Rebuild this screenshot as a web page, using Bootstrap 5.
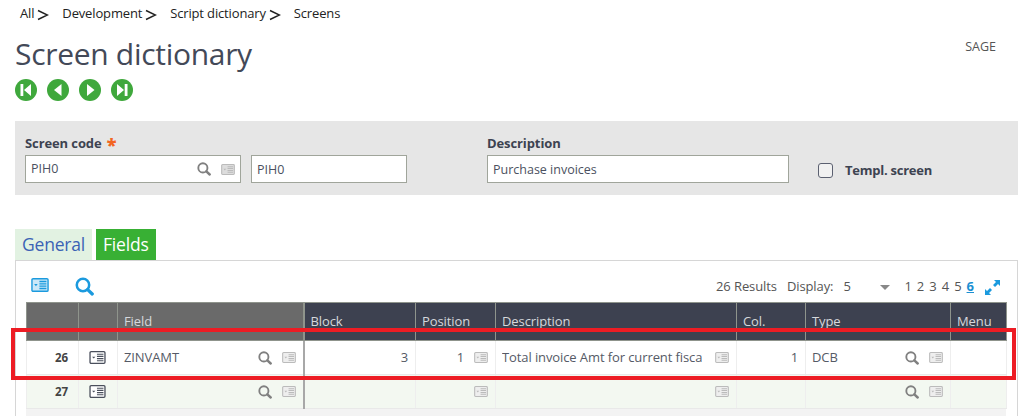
<!DOCTYPE html>
<html lang="en">
<head>
<meta charset="utf-8">
<title>Screen dictionary</title>
<link rel="stylesheet" href="https://cdn.jsdelivr.net/npm/bootstrap@5.3.0/dist/css/bootstrap.min.css">
<style>
html,body{height:416px;overflow:hidden}
body{position:relative;font-family:"Open Sans","Noto Sans",sans-serif;font-size:13px;color:#3d4351;background:#fff;width:1024px}
.crumbs{padding:4px 0 0 20px;height:32px;font-size:13px;color:#222;gap:13px;letter-spacing:-.15px}
.crumbs svg{margin:5px 0 0 3px}
.head-row{padding:0 28px 0 15px;height:44px}
.page-title{font-size:30px;font-weight:400;line-height:44px;margin:0;letter-spacing:-.3px;color:#434958}
.owner{font-size:12.5px;color:#555;margin-top:6px}
.rec-nav{padding-left:15px;gap:10px;height:45px;padding-top:3px}
.search-panel{margin:0 6px 0 15px;background:#e6e6e6;height:74px;padding:14px 10px 0}
.lab{font-weight:700;font-size:13px;line-height:16px;margin-bottom:4px;height:16px;letter-spacing:-.1px}
.lab b{color:#f26522;font-size:18px;line-height:12px;vertical-align:-3px;margin-left:2px}
.inp{height:28px;background:#fff;border:1px solid #a0a59b;padding:0 5px;line-height:28px;color:#4b5160;font-size:12.5px;gap:10px}
.w-code{width:216px}.w-sec{width:156px;margin-left:10px}.w-desc{width:302px;margin-left:80px}
.tmpl{margin:23px 0 0 29px;gap:12px;font-weight:700;line-height:16px;height:24px;letter-spacing:-.25px}
.tick{width:15px;height:15px;border:1.5px solid #5b6070;border-radius:3px;background:#f1f1f1}
.tab-row{margin:34px 0 0 15px;height:31px;gap:4px}
.tab-g,.tab-f{font-size:17.5px;line-height:31px;padding:0 7px;letter-spacing:-.2px}
.tab-g{background:#e2f2e2;color:#3b62b5}
.tab-f{background:#38b034;color:#fff}
.grid-card{margin:0 6px 0 15px;border:1px solid #d6d6d6;border-bottom:0;height:156px;padding:0 11px 0 10px;overflow:hidden}
.bar{height:41px;padding:0 5px 0 5px}
.bar .tools{gap:26px;padding-top:7px}
.bar .tools .find{margin-top:3px}
.meta{font-size:13px;color:#555;gap:10px;padding-top:11px;letter-spacing:-.1px}
.pager{gap:5px;letter-spacing:0;margin-left:4px}
.pager a{color:#1b8fd2;font-weight:700;text-decoration:underline}
.dd{width:47px;display:flex;justify-content:space-between;align-items:center}
.caret-t{width:0;height:0;border:5px solid transparent;border-top:5px solid #888;border-bottom:0}
table.fgrid{table-layout:fixed;width:980px;border-collapse:collapse;margin:0;font-size:13px}
.fgrid th{background:#3d4150;color:#d6d8dc;font-weight:400;height:38px;vertical-align:middle;padding:0 6px 2px;border:1px solid #8f948c;line-height:16px;letter-spacing:-.1px}
.fgrid th.frz{background:#6a6a6a}
.fgrid th.frz-end{border-right:2px solid #8f948c}
.fgrid td{height:34px;padding:0 7px 0 6px;border-left:1px solid #eee;border-right:1px solid #eee;border-bottom:1px solid #e9e9e9;color:#555a66;white-space:nowrap;overflow:hidden;letter-spacing:-.1px}
.fgrid td.frz-end{border-right:2px solid #a8a8a8}
.fgrid tr.alt td{background:#f3f8f1;height:34px}
.fgrid td.num{font-weight:700;text-align:right;padding-right:10px;font-size:11.5px;color:#444}
.cell{display:flex;align-items:center;justify-content:space-between;gap:6px}
.cell .ic{display:flex;gap:10px;margin-left:auto;align-items:center}
.r-val{margin-left:auto}
.mag-ic{color:#808080}
.bottom-band{height:8px;background:#f3f3f3;width:980px}
.red-mark{position:absolute;left:11px;top:328px;width:1005px;height:52px;border:4px solid #ed1c24;pointer-events:none}
svg{display:block;flex:none}
</style>
</head>
<body>
<svg width="0" height="0" class="position-absolute">
  <symbol id="mag" viewBox="0 0 15 15"><circle cx="6.3" cy="6.3" r="4.9" fill="none" stroke="currentColor" stroke-width="2"/><path d="M10 10l3.6 3.4" stroke="currentColor" stroke-width="2.6" stroke-linecap="round"/></symbol>
  <symbol id="card" viewBox="0 0 15 12"><rect x=".6" y=".6" width="13.8" height="10.8" rx="1" fill="var(--f,#fff)" stroke="currentColor" stroke-width="1.2"/><path d="M2.5 5.2h3L4 7z" fill="currentColor"/><path d="M7 3h6M7 5h6M7 7h6M7 9h6" stroke="currentColor" stroke-width="1.1"/></symbol>
  <symbol id="sep" viewBox="0 0 12 12"><path d="M1 1.500l9.500 4.500L1 10.500" fill="none" stroke="#222" stroke-width="1.5"/></symbol>
</svg>

<nav class="crumbs d-flex" aria-label="breadcrumb">
  <span class="d-flex">All<svg width="12" height="12"><use href="#sep"/></svg></span>
  <span class="d-flex">Development<svg width="12" height="12"><use href="#sep"/></svg></span>
  <span class="d-flex">Script dictionary<svg width="12" height="12"><use href="#sep"/></svg></span>
  <span>Screens</span>
</nav>

<div class="head-row d-flex justify-content-between">
  <h1 class="page-title">Screen dictionary</h1>
  <span class="owner">SAGE</span>
</div>

<div class="rec-nav d-flex">
  <svg width="22" height="22" viewBox="0 0 22 22"><circle cx="11" cy="11" r="11" fill="#3fa83c"/><path d="M5.500 5h2.800v12H5.500zM16 5v12l-7-6z" fill="#fff"/></svg>
  <svg width="22" height="22" viewBox="0 0 22 22"><circle cx="11" cy="11" r="11" fill="#3fa83c"/><path d="M14.500 5v12L7 11z" fill="#fff"/></svg>
  <svg width="22" height="22" viewBox="0 0 22 22"><circle cx="11" cy="11" r="11" fill="#3fa83c"/><path d="M8 5v12l7.500-6z" fill="#fff"/></svg>
  <svg width="22" height="22" viewBox="0 0 22 22"><circle cx="11" cy="11" r="11" fill="#3fa83c"/><path d="M6 5v12l7-6zM13.700 5h2.800v12h-2.800z" fill="#fff"/></svg>
</div>

<section class="search-panel d-flex">
  <div>
    <div class="lab">Screen code <b>*</b></div>
    <div class="d-flex">
      <div class="inp w-code d-flex align-items-center">
        <span class="me-auto">PIH0</span>
        <svg width="14" height="14" class="mag-ic"><use href="#mag"/></svg>
        <svg width="14" height="11" style="--f:#ddd;color:#bbb"><use href="#card"/></svg>
      </div>
      <div class="inp w-sec">PIH0</div>
    </div>
  </div>
  <div>
    <div class="lab w-desc">Description</div>
    <div class="inp w-desc">Purchase invoices</div>
  </div>
  <div class="tmpl d-flex align-items-center">
    <span class="tick"></span><span>Templ. screen</span>
  </div>
</section>

<div class="tab-row d-flex">
  <div class="tab-g">General</div>
  <div class="tab-f">Fields</div>
</div>

<section class="grid-card">
  <div class="bar d-flex justify-content-between align-items-center">
    <div class="tools d-flex align-items-center">
      <svg width="18" height="14" style="--f:#cbe8f8;color:#1b9ade"><use href="#card"/></svg>
      <svg width="19" height="19" class="find" style="color:#1b9ade"><use href="#mag"/></svg>
    </div>
    <div class="meta d-flex align-items-center">
      <span>26 Results</span>
      <span>Display:</span>
      <span class="dd"><span>5</span><i class="caret-t"></i></span>
      <span class="pager d-flex"><span>1</span><span>2</span><span>3</span><span>4</span><span>5</span><a href="#">6</a></span>
      <svg width="17" height="17" viewBox="0 0 17 17"><path d="M10 1h6v6l-2-2-3 3-2-2 3-3zM1 16v-6l2 2 3-3 2 2-3 3 2 2z" fill="#1b9ade"/></svg>
    </div>
  </div>
  <table class="fgrid">
    <colgroup><col style="width:52px"><col style="width:39px"><col style="width:186px"><col style="width:112px"><col style="width:80px"><col style="width:241px"><col style="width:69px"><col style="width:145px"><col style="width:56px"></colgroup>
    <thead><tr>
      <th class="frz"></th><th class="frz"></th><th class="frz frz-end">Field</th>
      <th>Block</th><th>Position</th><th>Description</th><th>Col.</th><th>Type</th><th>Menu</th>
    </tr></thead>
    <tbody>
      <tr>
        <td class="num">26</td>
        <td><svg width="17" height="13" class="mx-auto" style="color:#4a4f5c"><use href="#card"/></svg></td>
        <td class="frz-end"><div class="cell"><span>ZINVAMT</span><span class="ic"><svg width="14" height="14" class="mag-ic"><use href="#mag"/></svg><svg width="14" height="11" style="--f:#eee;color:#bbb"><use href="#card"/></svg></span></div></td>
        <td class="text-end">3</td>
        <td><div class="cell"><span class="r-val">1</span><svg width="14" height="11" class="ms-1" style="--f:#eee;color:#bbb"><use href="#card"/></svg></div></td>
        <td><div class="cell"><span class="overflow-hidden">Total invoice Amt for current fisca</span><svg width="14" height="11" style="--f:#eee;color:#bbb"><use href="#card"/></svg></div></td>
        <td class="text-end">1</td>
        <td><div class="cell"><span>DCB</span><span class="ic"><svg width="14" height="14" class="mag-ic"><use href="#mag"/></svg><svg width="14" height="11" style="--f:#eee;color:#bbb"><use href="#card"/></svg></span></div></td>
        <td></td>
      </tr>
      <tr class="alt">
        <td class="num">27</td>
        <td><svg width="17" height="13" class="mx-auto" style="color:#4a4f5c"><use href="#card"/></svg></td>
        <td class="frz-end"><div class="cell"><span class="ic"><svg width="14" height="14" class="mag-ic"><use href="#mag"/></svg><svg width="14" height="11" style="--f:#eee;color:#bbb"><use href="#card"/></svg></span></div></td>
        <td></td>
        <td><div class="cell"><svg width="14" height="11" class="ms-auto" style="--f:#eee;color:#bbb"><use href="#card"/></svg></div></td>
        <td><div class="cell"><svg width="14" height="11" class="ms-auto" style="--f:#eee;color:#bbb"><use href="#card"/></svg></div></td>
        <td></td>
        <td><div class="cell"><span class="ic"><svg width="14" height="14" class="mag-ic"><use href="#mag"/></svg><svg width="14" height="11" style="--f:#eee;color:#bbb"><use href="#card"/></svg></span></div></td>
        <td></td>
      </tr>
    </tbody>
  </table>
  <div class="bottom-band"></div>
</section>

<div class="red-mark"></div>
<script src="https://cdn.jsdelivr.net/npm/bootstrap@5.3.0/dist/js/bootstrap.bundle.min.js"></script>
</body>
</html>
